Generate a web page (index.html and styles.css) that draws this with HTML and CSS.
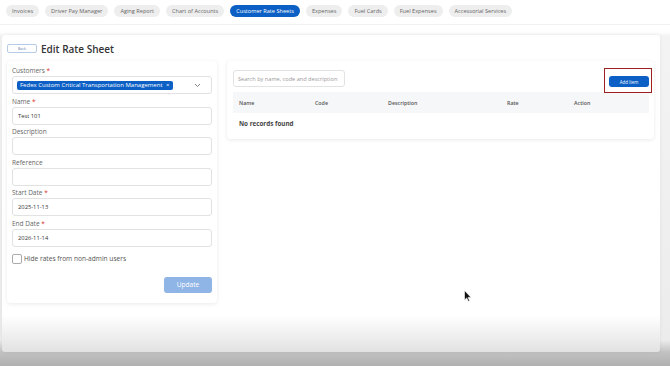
FILE: index.html
```html
<!DOCTYPE html>
<html lang="en">
<head>
    <meta charset="UTF-8">
    <meta name="viewport" content="width=device-width, initial-scale=1.0">
    <title>Edit Rate Sheet</title>
    <link rel="stylesheet" href="styles.css">
</head>
<body>
    <nav class="tabs">
        <a href="#" class="tab">Invoices</a>
        <a href="#" class="tab">Driver Pay Manager</a>
        <a href="#" class="tab">Aging Report</a>
        <a href="#" class="tab">Chart of Accounts</a>
        <a href="#" class="tab active">Customer Rate Sheets</a>
        <a href="#" class="tab">Expenses</a>
        <a href="#" class="tab">Fuel Cards</a>
        <a href="#" class="tab">Fuel Expenses</a>
        <a href="#" class="tab">Accessorial Services</a>
    </nav>

    <main class="panel">
        <div class="page-head">
            <button type="button" class="btn-back">Back</button>
            <h1 class="page-title">Edit Rate Sheet</h1>
        </div>

        <div class="content">
            <!-- Formulario -->
            <section class="card form-card">
                <div class="form-group">
                    <label>Customers <span class="req">*</span></label>
                    <div class="select-box">
                        <span class="chip">Fedex Custom Critical Transportation Management <span class="chip-x">&times;</span></span>
                        <svg class="chevron" width="7" height="5" viewBox="0 0 7 5"><path d="M1 1l2.5 2.5L6 1" fill="none" stroke="#777" stroke-width="0.9"/></svg>
                    </div>
                </div>
                <div class="form-group">
                    <label>Name <span class="req">*</span></label>
                    <input type="text" value="Test 101">
                </div>
                <div class="form-group">
                    <label>Description</label>
                    <input type="text">
                </div>
                <div class="form-group">
                    <label>Reference</label>
                    <input type="text">
                </div>
                <div class="form-group">
                    <label>Start Date <span class="req">*</span></label>
                    <input type="text" value="2025-11-13">
                </div>
                <div class="form-group">
                    <label>End Date <span class="req">*</span></label>
                    <input type="text" value="2026-11-14">
                </div>
                <div class="check-row">
                    <span class="checkbox"></span>
                    <span>Hide rates from non-admin users</span>
                </div>
                <div class="form-actions">
                    <button type="button" class="btn-update">Update</button>
                </div>
            </section>

            <!-- Tabla -->
            <section class="card table-card">
                <div class="table-top">
                    <input type="text" class="search" placeholder="Search by name, code and description">
                    <span class="highlight">
                        <button type="button" class="btn-add">Add Item</button>
                    </span>
                </div>
                <div class="table-head">
                    <span>Name</span>
                    <span>Code</span>
                    <span>Description</span>
                    <span>Rate</span>
                    <span>Action</span>
                </div>
                <div class="table-empty">No records found</div>
            </section>
        </div>
    </main>

    <svg class="cursor" width="8" height="12" viewBox="0 0 8 12">
        <path d="M0.5 0.5v9.5l2.2-2.1 1.6 3.4 1.3-0.6-1.6-3.3h3z" fill="#111" stroke="#fff" stroke-width="0.6"/>
    </svg>
</body>
</html>
```

FILE: styles.css
```css
body {
    margin: 0;
    padding: 0;
    height: 366px;
    overflow: hidden;
    font-family: "Open Sans", Arial, sans-serif;
    color: #333;
    background: linear-gradient(to bottom, #fff 0, #fff 32px, #f3f3f3 36px, #ececec 340px, #c2c2c2 352px, #b0b0b0 366px);
    position: relative;
}

.tabs {
    display: flex;
    gap: 6px;
    padding: 5px 6px 0;
    height: 19px;
    background: white;
    border-bottom: 1px solid #f1f1f1;
}

.tab {
    display: inline-block;
    height: 12px;
    line-height: 12px;
    padding: 0 6px;
    border-radius: 7px;
    background: #eeeeee;
    color: #666;
    font-size: 5.6px;
    text-decoration: none;
}

.tab.active {
    background: #0b5fc5;
    color: white;
}

.panel {
    margin: 10px 10px 0 2px;
    height: 317px;
    box-sizing: border-box;
    padding: 9px 6px 0 5px;
    background: linear-gradient(to bottom, #fff 0, #fff 280px, #e2e2e2 317px);
    border-radius: 3px;
    box-shadow: 0 0 4px rgba(0, 0, 0, 0.06);
}

.page-head {
    display: flex;
    align-items: center;
    gap: 4px;
    height: 9px;
}

.btn-back {
    width: 30px;
    height: 9px;
    padding: 0;
    border: 1px solid #b8cbe6;
    border-radius: 2px;
    background: white;
    color: #5a79a8;
    font-family: inherit;
    font-size: 3.6px;
}

.page-title {
    margin: 0;
    font-size: 10px;
    font-weight: 600;
    color: #333;
}

.content {
    display: flex;
    align-items: flex-start;
    gap: 10px;
    margin-top: 8px;
}

.card {
    background: white;
    border-radius: 4px;
    box-shadow: 0 1px 4px rgba(0, 0, 0, 0.09);
}

.form-card {
    width: 210px;
    box-sizing: border-box;
    padding: 6px 5px 10px;
}

.form-group {
    margin-bottom: 3.5px;
}

label {
    display: block;
    height: 8px;
    line-height: 8px;
    margin-bottom: 1px;
    font-size: 6.5px;
    color: #666;
}

.req {
    color: #d33;
}

input {
    display: block;
    width: 100%;
    height: 18px;
    box-sizing: border-box;
    padding: 0 5px;
    border: 1px solid #e2e2e2;
    border-radius: 3px;
    font-family: inherit;
    font-size: 5.8px;
    color: #333;
    outline: none;
}

.select-box {
    display: flex;
    align-items: center;
    justify-content: space-between;
    height: 18px;
    box-sizing: border-box;
    padding: 0 10px 0 4px;
    border: 1px solid #e2e2e2;
    border-radius: 3px;
}

.chip {
    display: inline-block;
    height: 9px;
    line-height: 9px;
    padding: 0 3px;
    border-radius: 2px;
    background: #0b5fc5;
    color: white;
    font-size: 6px;
}

.chip-x {
    margin-left: 2px;
    font-size: 6px;
}

.check-row {
    display: flex;
    align-items: center;
    gap: 2px;
    margin-top: 7px;
    font-size: 6.6px;
    color: #555;
}

.checkbox {
    width: 8px;
    height: 8px;
    border: 1px solid #aaa;
    border-radius: 2px;
}

.form-actions {
    display: flex;
    justify-content: flex-end;
    margin-top: 13px;
}

.btn-update {
    width: 48px;
    height: 16px;
    padding: 0;
    border: none;
    border-radius: 3px;
    background: #8fb4e6;
    color: white;
    font-family: inherit;
    font-size: 6.6px;
}

.table-card {
    flex: 1;
    padding: 9px 5px 5px 6px;
}

.table-top {
    display: flex;
    justify-content: space-between;
    align-items: flex-end;
    margin-bottom: 5px;
}

.search {
    width: 112px;
    height: 17px;
    padding: 0 4px;
    font-size: 5.6px;
}

.search::placeholder {
    color: #999;
}

.highlight {
    position: relative;
}

.highlight::after {
    content: "";
    position: absolute;
    top: -8px;
    left: -5px;
    right: -3px;
    bottom: -6px;
    border: 1.5px solid #a01f1f;
}

.btn-add {
    display: block;
    width: 40px;
    height: 11px;
    padding: 0;
    border: none;
    border-radius: 3px;
    background: #0b5fc5;
    color: white;
    font-family: inherit;
    font-size: 4.4px;
}

.table-head {
    display: grid;
    grid-template-columns: 76px 73px 119px 67px auto;
    align-items: center;
    height: 21px;
    padding-left: 6px;
    background: #f6f7f9;
    font-size: 5.3px;
    font-weight: 600;
    color: #555;
}

.table-empty {
    height: 21px;
    line-height: 21px;
    padding-left: 6px;
    font-size: 6.3px;
    font-weight: 700;
    color: #444;
}

.cursor {
    position: absolute;
    left: 464px;
    top: 290px;
}
```
